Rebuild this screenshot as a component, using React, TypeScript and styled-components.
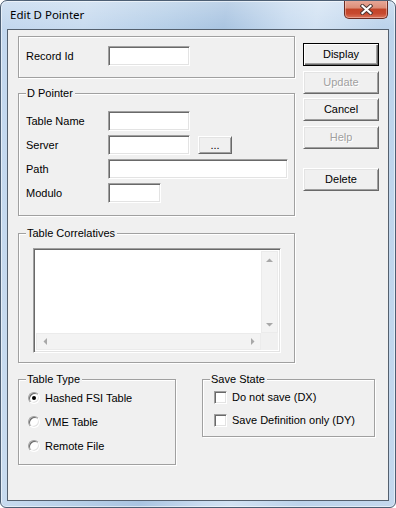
import styled, { createGlobalStyle } from 'styled-components'

const GlobalStyle = createGlobalStyle`
  html, body {
    margin: 0;
    padding: 0;
    background: #ffffff;
  }
  body {
    font-family: "Liberation Sans", Arial, sans-serif;
    font-size: 11px;
    color: #000;
  }
`

const Window = styled.div`
  width: 396px;
  height: 508px;
  box-sizing: border-box;
  border: 1px solid #4d5f74;
  border-radius: 7px 7px 6px 6px;
  padding: 0 6px 6px 6px;
  display: flex;
  flex-direction: column;
  overflow: hidden;
  background:
    linear-gradient(to bottom, rgba(255, 255, 255, 0.25), rgba(255, 255, 255, 0) 28px),
    linear-gradient(
      100deg,
      #c2d7ee 0%,
      #c8dbef 18%,
      #b6cfe8 35%,
      #a9c4e1 47%,
      #c9dcf0 60%,
      #d2e2f3 66%,
      #bcd3eb 80%,
      #c4d8ee 100%
    );
  box-shadow: inset 0 0 0 1px rgba(255, 255, 255, 0.55);
`

const TitleBar = styled.div`
  height: 28px;
  display: flex;
  align-items: flex-start;
  justify-content: space-between;
  padding-left: 3px;
`

const Title = styled.span`
  font-family: "Noto Sans", "Open Sans", sans-serif;
  font-size: 11.5px;
  line-height: 14px;
  margin-top: 7px;
  color: #000;
`

const CloseButton = styled.div`
  width: 44px;
  height: 19px;
  box-sizing: border-box;
  margin-top: -1px;
  margin-right: 1px;
  border: 1px solid #6a2b22;
  border-top: none;
  border-radius: 0 0 5px 5px;
  display: flex;
  align-items: center;
  justify-content: center;
  background: linear-gradient(
    to bottom,
    #e8ab9c 0%,
    #dc8d77 45%,
    #c24428 50%,
    #c7492f 75%,
    #d9735a 100%
  );
  box-shadow: inset 0 0 0 1px rgba(255, 220, 210, 0.45);
`

const Client = styled.div`
  flex: 1;
  display: flex;
  align-items: flex-start;
  border: 1px solid #54606e;
  background: #f0f0f0;
  padding: 6px 0 0 10px;
`

const LeftColumn = styled.div`
  width: 277px;
  flex-shrink: 0;
  display: flex;
  flex-direction: column;
`

const ButtonColumn = styled.div`
  margin: 7px 0 0 8px;
  display: flex;
  flex-direction: column;
`

const GroupBox = styled.div<{ $w: number; $h: number; $top?: number }>`
  position: relative;
  box-sizing: border-box;
  flex-shrink: 0;
  width: ${(p) => p.$w}px;
  height: ${(p) => p.$h}px;
  margin-top: ${(p) => p.$top ?? 0}px;
  border: 1px solid #a0a0a0;
  box-shadow: inset 1px 1px 0 #ffffff, 1px 1px 0 #ffffff;
`

const Caption = styled.span`
  position: absolute;
  top: -7px;
  left: 7px;
  padding: 0 2px 0 1px;
  line-height: 13px;
  background: #f0f0f0;
`

const RecordRow = styled.div`
  display: flex;
  align-items: center;
  padding: 9px 0 0 7px;
`

const FieldGrid = styled.div`
  display: grid;
  grid-template-columns: 82px auto;
  row-gap: 4px;
  align-items: center;
  padding: 17px 0 0 7px;
`

const Label = styled.span<{ $w?: number }>`
  width: ${(p) => (p.$w ? `${p.$w}px` : 'auto')};
  line-height: 20px;
  white-space: nowrap;
`

const InlineRow = styled.div`
  display: flex;
  align-items: center;
  gap: 8px;
`

const TextInput = styled.input<{ $w: number }>`
  box-sizing: border-box;
  width: ${(p) => p.$w}px;
  height: 20px;
  margin: 0;
  padding: 0 3px;
  border: 1px solid;
  border-color: #a0a0a0 #ffffff #ffffff #a0a0a0;
  box-shadow: inset 1px 1px 0 #696969, inset -1px -1px 0 #e3e3e3;
  background: #ffffff;
  font: inherit;
  outline: none;
`

const Button = styled.button<{ $default?: boolean; $top?: number; $w?: number; $h?: number }>`
  box-sizing: border-box;
  width: ${(p) => p.$w ?? 76}px;
  height: ${(p) => p.$h ?? 23}px;
  margin: ${(p) => p.$top ?? 0}px 0 0 0;
  padding: 0;
  background: #f0f0f0;
  font: inherit;
  color: #000;
  border: 1px solid;
  border-color: ${(p) => (p.$default ? '#000000' : '#ffffff #696969 #696969 #ffffff')};
  box-shadow: ${(p) =>
    p.$default
      ? 'inset 1px 1px 0 #ffffff, inset -1px -1px 0 #696969, inset -2px -2px 0 #a0a0a0'
      : 'inset 1px 1px 0 #e3e3e3, inset -1px -1px 0 #a0a0a0'};
  line-height: 13px;

  &:disabled {
    color: #a0a0a0;
    text-shadow: 1px 1px 0 #ffffff;
  }
`

const ListBox = styled.div`
  box-sizing: border-box;
  width: 248px;
  height: 105px;
  margin: 14px 0 0 14px;
  padding: 2px;
  border: 1px solid;
  border-color: #a0a0a0 #ffffff #ffffff #a0a0a0;
  box-shadow: inset 1px 1px 0 #696969, inset -1px -1px 0 #e3e3e3;
  background: #ffffff;
  display: grid;
  grid-template-columns: 1fr 17px;
  grid-template-rows: 1fr 17px;
`

const ListArea = styled.div`
  background: #ffffff;
`

const ScrollBar = styled.div<{ $vertical?: boolean }>`
  box-sizing: border-box;
  display: flex;
  flex-direction: ${(p) => (p.$vertical ? 'column' : 'row')};
  justify-content: space-between;
  background: #f3f3f3;
  border: 1px solid #ebebeb;
`

const ScrollButton = styled.div`
  width: 15px;
  height: 15px;
  display: flex;
  align-items: center;
  justify-content: center;
`

const Corner = styled.div`
  background: #f0f0f0;
`

const BottomRow = styled.div`
  display: flex;
  align-items: flex-start;
  gap: 26px;
  margin-top: 16px;
`

const OptionList = styled.div<{ $gap: number; $top: number; $left: number }>`
  display: flex;
  flex-direction: column;
  gap: ${(p) => p.$gap}px;
  padding: ${(p) => p.$top}px 0 0 ${(p) => p.$left}px;
`

const Option = styled.div`
  display: flex;
  align-items: center;
  gap: 5px;
  height: 16px;
  white-space: nowrap;
`

const RadioMark = styled.span<{ $checked?: boolean }>`
  box-sizing: border-box;
  width: 12px;
  height: 12px;
  border-radius: 50%;
  border: 1px solid;
  border-color: #a0a0a0 #ffffff #ffffff #a0a0a0;
  box-shadow: inset 1px 1px 0 #696969, inset -1px -1px 0 #e3e3e3;
  background: #ffffff;
  display: flex;
  align-items: center;
  justify-content: center;

  &::after {
    content: '';
    width: 4px;
    height: 4px;
    border-radius: 50%;
    background: ${(p) => (p.$checked ? '#000000' : 'transparent')};
  }
`

const CheckMark = styled.span`
  box-sizing: border-box;
  width: 13px;
  height: 13px;
  border: 1px solid;
  border-color: #a0a0a0 #ffffff #ffffff #a0a0a0;
  box-shadow: inset 1px 1px 0 #696969, inset -1px -1px 0 #e3e3e3;
  background: #ffffff;
`

const Arrow = ({ dir }: { dir: 'up' | 'down' | 'left' | 'right' }) => {
  const pts = {
    up: '0,4 7,4 3.5,0.5',
    down: '0,0 7,0 3.5,3.5',
    left: '4,0 4,7 0.5,3.5',
    right: '0,0 0,7 3.5,3.5',
  }[dir]
  const vertical = dir === 'up' || dir === 'down'
  return (
    <svg width={vertical ? 7 : 4} height={vertical ? 4 : 7} viewBox={vertical ? '0 0 7 4' : '0 0 4 7'}>
      <polygon points={pts} fill="#a8a8a8" />
    </svg>
  )
}

const CloseGlyph = () => (
  <svg width="13" height="11" viewBox="0 0 13 11">
    <path d="M2.5 2 L10.5 9 M10.5 2 L2.5 9" stroke="#4a3532" strokeWidth="4" strokeLinecap="square" />
    <path d="M2.5 2 L10.5 9 M10.5 2 L2.5 9" stroke="#ffffff" strokeWidth="2.2" strokeLinecap="square" />
  </svg>
)

export default function App() {
  return (
    <>
      <GlobalStyle />
      <Window>
        <TitleBar>
          <Title>Edit D Pointer</Title>
          <CloseButton>
            <CloseGlyph />
          </CloseButton>
        </TitleBar>
        <Client>
          <LeftColumn>
            <GroupBox $w={277} $h={42}>
              <RecordRow>
                <Label $w={82}>Record Id</Label>
                <TextInput $w={82} />
              </RecordRow>
            </GroupBox>

            <GroupBox $w={277} $h={123} $top={15}>
              <Caption>D Pointer</Caption>
              <FieldGrid>
                <Label>Table Name</Label>
                <TextInput $w={82} />
                <Label>Server</Label>
                <InlineRow>
                  <TextInput $w={82} />
                  <Button $w={34} $h={18}>
                    ...
                  </Button>
                </InlineRow>
                <Label>Path</Label>
                <TextInput $w={180} />
                <Label>Modulo</Label>
                <TextInput $w={53} />
              </FieldGrid>
            </GroupBox>

            <GroupBox $w={277} $h={130} $top={17}>
              <Caption>Table Correlatives</Caption>
              <ListBox>
                <ListArea />
                <ScrollBar $vertical>
                  <ScrollButton>
                    <Arrow dir="up" />
                  </ScrollButton>
                  <ScrollButton>
                    <Arrow dir="down" />
                  </ScrollButton>
                </ScrollBar>
                <ScrollBar>
                  <ScrollButton>
                    <Arrow dir="left" />
                  </ScrollButton>
                  <ScrollButton>
                    <Arrow dir="right" />
                  </ScrollButton>
                </ScrollBar>
                <Corner />
              </ListBox>
            </GroupBox>

            <BottomRow>
              <GroupBox $w={158} $h={86}>
                <Caption>Table Type</Caption>
                <OptionList $gap={8} $top={10} $left={9}>
                  <Option>
                    <RadioMark $checked />
                    Hashed FSI Table
                  </Option>
                  <Option>
                    <RadioMark />
                    VME Table
                  </Option>
                  <Option>
                    <RadioMark />
                    Remote File
                  </Option>
                </OptionList>
              </GroupBox>
              <GroupBox $w={173} $h={58}>
                <Caption>Save State</Caption>
                <OptionList $gap={7} $top={9} $left={11}>
                  <Option>
                    <CheckMark />
                    Do not save (DX)
                  </Option>
                  <Option>
                    <CheckMark />
                    Save Definition only (DY)
                  </Option>
                </OptionList>
              </GroupBox>
            </BottomRow>
          </LeftColumn>

          <ButtonColumn>
            <Button $default>Display</Button>
            <Button $top={5} disabled>
              Update
            </Button>
            <Button $top={4}>Cancel</Button>
            <Button $top={5} disabled>
              Help
            </Button>
            <Button $top={19}>Delete</Button>
          </ButtonColumn>
        </Client>
      </Window>
    </>
  )
}
